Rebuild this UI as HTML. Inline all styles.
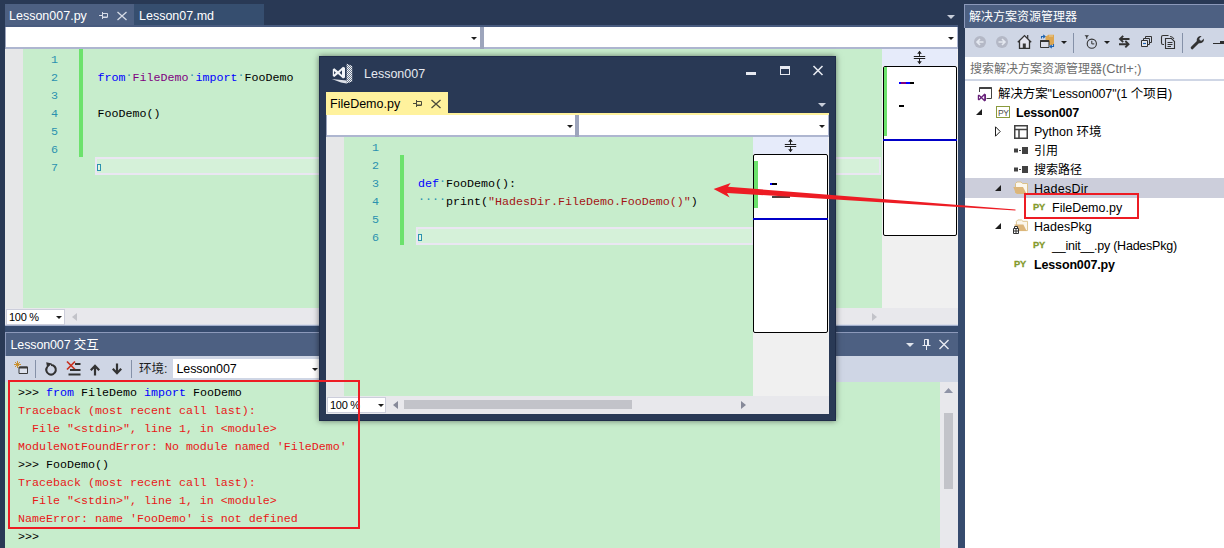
<!DOCTYPE html>
<html lang="zh-CN">
<head>
<meta charset="utf-8">
<title>Lesson007</title>
<style>
html,body{margin:0;padding:0;}
body{width:1224px;height:548px;overflow:hidden;background:#293955;position:relative;
  font-family:"Liberation Sans","Noto Sans CJK SC",sans-serif;font-size:12px;color:#000;}
.a{position:absolute;box-sizing:border-box;}
.t{position:absolute;white-space:pre;line-height:1;}
.ui{font-family:"Liberation Sans","Noto Sans CJK SC",sans-serif;font-size:12.5px;}
.mono{font-family:"Liberation Mono","Noto Sans CJK SC",monospace;font-size:11.67px;}
.code{position:absolute;white-space:pre;font-family:"Liberation Mono",monospace;font-size:11.67px;line-height:22px;height:18px;}
.ln{position:absolute;white-space:pre;font-family:"Liberation Mono",monospace;font-size:11.67px;line-height:22px;height:18px;color:#2B91AF;text-align:right;}
.kw{color:#0000FF;}
.mod{color:#800080;}
.str{color:#A31515;}
.err{color:#E81818;}
.ws{color:#2B91AF;position:relative;top:-3px;}
svg{position:absolute;overflow:visible;}
</style>
</head>
<body>
<!-- splitter bands -->
<div class="a" style="left:957px;top:0;width:8px;height:548px;background:linear-gradient(to bottom,#293955 20px,#364B6E 170px);"></div>
<div class="a" style="left:5px;top:325px;width:953px;height:8px;background:#364B6E;"></div>

<!-- ================= MAIN DOCUMENT WELL ================= -->
<div id="doc">
  <!-- tabs -->
  <div class="a" style="left:5px;top:4px;width:129px;height:21px;background:#4D6082;"></div>
  <div class="a" style="left:134px;top:4px;width:130px;height:21px;background:#364E6F;"></div>
  <div class="a" style="left:5px;top:25px;width:953px;height:2px;background:#485B7F;"></div>
  <div class="t ui" style="left:9px;top:10px;color:#fff;">Lesson007.py</div>
  <div class="t ui" style="left:139px;top:10px;color:#fff;">Lesson07.md</div>
  <!-- pin + close -->
  <svg style="left:99px;top:12px;" width="9" height="8" viewBox="0 0 9 8"><path d="M0 3.5H3.5M3.5 0V7M3.5 1.5H8.5V5H3.5M3.5 5.5H8.5" fill="none" stroke="#D6DBE6" stroke-width="1"/></svg>
  <svg style="left:117px;top:12px;" width="10" height="8" viewBox="0 0 10 8"><path d="M0.5 0L9.5 8M9.5 0L0.5 8" fill="none" stroke="#D6DBE6" stroke-width="1.3"/></svg>
  <svg style="left:947px;top:15px;" width="8" height="4" viewBox="0 0 8 4"><path d="M0 0H8L4 4Z" fill="#C8CEDA"/></svg>
  <!-- nav bar -->
  <div class="a" style="left:5px;top:27px;width:953px;height:22px;background:#9DA5BC;"></div>
  <div class="a" style="left:6px;top:27px;width:474px;height:22px;background:#fff;border-bottom:2px solid #AEB6D0;"></div>
  <div class="a" style="left:484px;top:27px;width:473.700px;height:22px;background:#fff;border-bottom:2px solid #AEB6D0;border-right:1.400px solid #AEB6D0;"></div>
  <svg style="left:471px;top:37px;" width="6" height="3" viewBox="0 0 6 3"><path d="M0 0H6L3 3Z" fill="#1E1E1E"/></svg>
  <svg style="left:948px;top:37px;" width="6" height="3" viewBox="0 0 6 3"><path d="M0 0H6L3 3Z" fill="#1E1E1E"/></svg>
  <!-- editor -->
  <div class="a" style="left:5px;top:49px;width:953px;height:259px;background:#C7EDCC;"></div>
  <div class="a" style="left:5px;top:49px;width:18px;height:259px;background:#E6E7E8;"></div>
  <div class="a" style="left:79px;top:49px;width:4px;height:108px;background:#6CE26C;"></div>
  <div class="a" style="left:95px;top:157px;width:786px;height:18px;background:#D5F1D9;border:2px solid #EAE6F2;"></div>
  <div class="a" style="left:97px;top:164px;width:4px;height:7px;border:1px solid #2B91AF;background:#E2F6E2;"></div>
  <div class="ln" style="left:23px;top:49px;width:35px;">1</div>
  <div class="ln" style="left:23px;top:67px;width:35px;">2</div>
  <div class="ln" style="left:23px;top:85px;width:35px;">3</div>
  <div class="ln" style="left:23px;top:103px;width:35px;">4</div>
  <div class="ln" style="left:23px;top:121px;width:35px;">5</div>
  <div class="ln" style="left:23px;top:139px;width:35px;">6</div>
  <div class="ln" style="left:23px;top:157px;width:35px;">7</div>
  <div class="code" style="left:97.500px;top:67px;"><span class="kw">from</span><span class="ws">·</span><span class="mod">FileDemo</span><span class="ws">·</span><span class="kw">import</span><span class="ws">·</span>FooDemo</div>
  <div class="code" style="left:97.500px;top:103px;">FooDemo()</div>
  <!-- minimap scrollbar -->
  <div class="a" style="left:882px;top:49px;width:76px;height:259px;background:#F0F0F0;"></div>
  <div class="a" style="left:882px;top:49px;width:75px;height:17px;background:#E6EBFA;"></div>
  <svg style="left:913px;top:50px;" width="13" height="15" viewBox="0 0 13 15"><path d="M0.800 6.500H12.200M0.800 8.500H12.200M6.500 1.500V6.500M6.500 8.500V13.500" fill="none" stroke="#1E1E1E" stroke-width="1"/><path d="M4.200 3.800L6.500 0.800L8.800 3.800ZM4.200 11.200L6.500 14.200L8.800 11.200Z" fill="#1E1E1E"/></svg>
  <div class="a" style="left:882.500px;top:65.500px;width:74.500px;height:170px;background:#fff;border:1px solid #000;border-radius:2px;"></div>
  <div class="a" style="left:883.500px;top:66.500px;width:3.500px;height:69.200px;background:#6CE26C;"></div>
  <div class="a" style="left:883px;top:139px;width:74px;height:2px;background:#0000C8;"></div>
  <div class="a" style="left:899px;top:82px;width:2px;height:2px;background:#0000FF;"></div>
  <div class="a" style="left:901px;top:82px;width:5px;height:2px;background:#800080;"></div>
  <div class="a" style="left:906px;top:82px;width:4px;height:2px;background:#0000FF;"></div>
  <div class="a" style="left:910px;top:82px;width:4px;height:2px;background:#000;"></div>
  <div class="a" style="left:899px;top:105px;width:5px;height:2px;background:#000;"></div>
  <!-- bottom scrollbar row -->
  <div class="a" style="left:5px;top:308px;width:953px;height:18px;background:#E8E8EC;"></div>
  <div class="a" style="left:5px;top:324px;width:953px;height:2.200px;background:linear-gradient(to bottom,#F4F5F9,#8797BC);"></div>
  <div class="a" style="left:6px;top:309px;width:59px;height:16px;background:#fff;border:1px solid #CCCEDB;"></div>
  <div class="t ui" style="left:9px;top:312px;color:#000;font-size:11px;letter-spacing:-0.300px;">100 %</div>
  <svg style="left:56px;top:316px;" width="6" height="3" viewBox="0 0 6 3"><path d="M0 0H6L3 3Z" fill="#1E1E1E"/></svg>
  <svg style="left:72px;top:313px;" width="5" height="8" viewBox="0 0 5 8"><path d="M5 0V8L0 4Z" fill="#C2C3C9"/></svg>
  <svg style="left:872px;top:313px;" width="5" height="8" viewBox="0 0 5 8"><path d="M0 0V8L5 4Z" fill="#C2C3C9"/></svg>
</div>

<!-- ================= INTERACTIVE PANEL ================= -->
<div id="inter">
  <div class="a" style="left:5px;top:332.300px;width:953px;height:23.700px;background:#4D6082;border-top:1px solid #8C99BA;border-left:1px solid #8C99BA;"></div>
  <div class="t ui" style="left:10.500px;top:339px;color:#fff;letter-spacing:-0.130px;">Lesson007 交互</div>
  <svg style="left:906px;top:343px;" width="8" height="4" viewBox="0 0 8 4"><path d="M0 0H8L4 4Z" fill="#E0E4EC"/></svg>
  <svg style="left:922px;top:339px;" width="9" height="11" viewBox="0 0 9 11"><path d="M2.5 0.5H6.5V6.5H2.5ZM5.5 0.5V6.5M0.5 6.5H8.5M4.5 6.5V11" fill="none" stroke="#E8EBF2" stroke-width="1"/></svg>
  <svg style="left:939px;top:340px;" width="10" height="9" viewBox="0 0 10 9"><path d="M0.5 0L9.5 9M9.5 0L0.5 9" fill="none" stroke="#E8EBF2" stroke-width="1.4"/></svg>
  <div class="a" style="left:5px;top:356px;width:953px;height:26px;background:#CFD6E5;"></div>
  <!-- toolbar icons -->
  <svg style="left:14px;top:361px;" width="15" height="15" viewBox="0 0 15 15"><path d="M5 6H13.500V12.500H5Z" fill="#DDE1EC" stroke="#3B3B3B" stroke-width="1"/><path d="M5 6.500H13.500" stroke="#3B3B3B" stroke-width="2"/><path d="M3.500 0V7M0 3.500H7M1 1L6 6M6 1L1 6" stroke="#C98A1E" stroke-width="0.9"/></svg>
  <div class="a" style="left:35px;top:360px;width:1px;height:18px;background:#8591A8;"></div>
  <svg style="left:44px;top:361px;" width="14" height="15" viewBox="0 0 14 15"><path d="M3.300 5.800A4.800 4.800 0 1 0 7 4" fill="none" stroke="#333" stroke-width="2.1"/><path d="M2.200 1.200L8 2.600L3.200 7Z" fill="#333"/></svg>
  <svg style="left:66px;top:361px;" width="15" height="15" viewBox="0 0 15 15"><path d="M1 0.500L9 8.500M9 0.500L1 8.500" stroke="#C8301F" stroke-width="1.7" fill="none"/><path d="M9 3H14.500M4 9H14.500M2.500 13.500H14.500" stroke="#333" stroke-width="2" fill="none"/></svg>
  <svg style="left:90px;top:364px;" width="10" height="12" viewBox="0 0 10 12"><path d="M5 1.800V11.500M0.800 6.200L5 1.800L9.200 6.200" fill="none" stroke="#333" stroke-width="2.200"/></svg>
  <svg style="left:112px;top:363px;" width="10" height="12" viewBox="0 0 10 12"><path d="M5 0.500V10.200M0.800 5.800L5 10.200L9.200 5.800" fill="none" stroke="#333" stroke-width="2.200"/></svg>
  <div class="a" style="left:131px;top:360px;width:1px;height:18px;background:#8591A8;"></div>
  <div class="t ui" style="left:139px;top:363px;color:#1E1E1E;">环境:</div>
  <div class="a" style="left:173px;top:359px;width:148px;height:19px;background:#fff;"></div>
  <div class="t ui" style="left:176.500px;top:363px;color:#000;letter-spacing:-0.120px;">Lesson007</div>
  <svg style="left:312px;top:368px;" width="6" height="3" viewBox="0 0 6 3"><path d="M0 0H6L3 3Z" fill="#1E1E1E"/></svg>
  <!-- content -->
  <div class="a" style="left:5px;top:382px;width:953px;height:166px;background:#C7EDCC;"></div>
  <div class="a" style="left:940px;top:382px;width:18px;height:166px;background:#E8E8EC;"></div>
  <svg style="left:944px;top:388px;" width="9" height="5" viewBox="0 0 9 5"><path d="M0 5H9L4.5 0Z" fill="#8E93A6"/></svg>
  <div class="a" style="left:944px;top:413px;width:9px;height:76px;background:#C2C3C9;"></div>
  <div class="code" style="left:18px;top:382px;">&gt;&gt;&gt; <span class="kw">from</span> FileDemo <span class="kw">import</span> FooDemo</div>
  <div class="code err" style="left:18px;top:400px;">Traceback (most recent call last):</div>
  <div class="code err" style="left:18px;top:418px;">  File "&lt;stdin&gt;", line 1, in &lt;module&gt;</div>
  <div class="code err" style="left:18px;top:436px;">ModuleNotFoundError: No module named 'FileDemo'</div>
  <div class="code" style="left:18px;top:454px;">&gt;&gt;&gt; FooDemo()</div>
  <div class="code err" style="left:18px;top:472px;">Traceback (most recent call last):</div>
  <div class="code err" style="left:18px;top:490px;">  File "&lt;stdin&gt;", line 1, in &lt;module&gt;</div>
  <div class="code err" style="left:18px;top:508px;">NameError: name 'FooDemo' is not defined</div>
  <div class="code" style="left:18px;top:526px;">&gt;&gt;&gt; </div>
</div>

<!-- ================= SOLUTION EXPLORER ================= -->
<div id="sol">
  <div class="a" style="left:964.300px;top:4.300px;width:260px;height:23.700px;background:#4D6082;border-top:1px solid #8C99BA;border-left:1px solid #8C99BA;"></div>
  <div class="t ui" style="left:969px;top:11px;color:#fff;font-size:12px;">解决方案资源管理器</div>
  <div class="a" style="left:965px;top:28px;width:259px;height:29px;background:#CFD6E5;"></div>
  <!-- toolbar icons -->
  <svg style="left:974px;top:36px;" width="12" height="12" viewBox="0 0 12 12"><circle cx="6" cy="6" r="6" fill="#B4B8C6"/><path d="M9.5 6H3.5M6 3L3 6L6 9" fill="none" stroke="#E4E8F0" stroke-width="1.6"/></svg>
  <svg style="left:996px;top:36px;" width="12" height="12" viewBox="0 0 12 12"><circle cx="6" cy="6" r="6" fill="#B4B8C6"/><path d="M2.5 6H8.5M6 3L9 6L6 9" fill="none" stroke="#E4E8F0" stroke-width="1.6"/></svg>
  <svg style="left:1017px;top:34px;" width="15" height="15" viewBox="0 0 15 15"><path d="M2.500 7.500V14.300H12.500V7.500L7.500 2.500Z" fill="#E4E4EE"/><path d="M5.800 9.500H8.800V14.300H5.800Z" fill="#3A3A3A"/><path d="M0.800 8.300L7.500 1.600L14.200 8.300M2.500 7V14.300H12.500V7" fill="none" stroke="#333" stroke-width="1.300"/><path d="M10.700 1V4.500" stroke="#333" stroke-width="1.200"/></svg>
  <svg style="left:1040px;top:34px;" width="16" height="16" viewBox="0 0 16 16"><path d="M5.500 2H7L8 0.700H14V11H5.500Z" fill="#DDA650"/><path d="M9 2H13" stroke="#F1D9A8" stroke-width="0.800"/><path d="M0.500 6.500H9V13.500H0.500Z" fill="#DADDE8" stroke="#333" stroke-width="1"/><path d="M0.500 7H9" stroke="#333" stroke-width="2"/><path d="M1.500 4.500V2.500H4.500M3.200 0.800L5 2.500L3.200 4.200" fill="none" stroke="#1E63B0" stroke-width="1.100"/><path d="M13.500 10V12.500H10.500M11.800 10.800L10 12.500L11.800 14.200" fill="none" stroke="#1E63B0" stroke-width="1.100"/></svg>
  <svg style="left:1061px;top:41px;" width="6" height="3" viewBox="0 0 6 3"><path d="M0 0H6L3 3Z" fill="#1E1E1E"/></svg>
  <div class="a" style="left:1073px;top:33px;width:1px;height:20px;background:#8591A8;"></div>
  <svg style="left:1083px;top:34px;" width="15" height="15" viewBox="0 0 15 15"><circle cx="8.800" cy="9.700" r="4.600" fill="none" stroke="#333" stroke-width="1.100"/><path d="M8.800 6.800V9.900H11.300" fill="none" stroke="#333" stroke-width="1"/><path d="M1.500 1.300H6L4.300 3V4.800H3.200V3Z" fill="#333"/></svg>
  <svg style="left:1104px;top:41px;" width="6" height="3" viewBox="0 0 6 3"><path d="M0 0H6L3 3Z" fill="#1E1E1E"/></svg>
  <svg style="left:1118px;top:35px;" width="13" height="13" viewBox="0 0 13 13"><path d="M2 4H11.500M5.200 0.800L2 4L5.200 7.200M10.500 9.200H1M7.300 6L10.500 9.200L7.300 12.400" fill="none" stroke="#333" stroke-width="1.900"/></svg>
  <svg style="left:1140px;top:35px;" width="13" height="12" viewBox="0 0 13 12"><path d="M5.500 3V1.500H11.500V7.500H10M3.500 5V3.500H9.500V9.500H8" fill="none" stroke="#333" stroke-width="1"/><path d="M1.500 5.500H7.500V11.500H1.500Z" fill="#E4E7F0" stroke="#333" stroke-width="1"/><path d="M3 8.500H6" stroke="#1E63B0" stroke-width="1.200"/></svg>
  <svg style="left:1161px;top:34px;" width="15" height="15" viewBox="0 0 15 15"><path d="M3 10.500H2Q0.500 10.500 0.500 9V3Q0.500 1.500 2 1.500H7.500" fill="none" stroke="#333" stroke-width="1.100"/><path d="M4.500 4.500H10.500L13.500 7.500V14.500H4.500Z" fill="none" stroke="#333" stroke-width="1.100"/><path d="M6.500 8.500H11.500M6.500 10.500H11.500M6.500 12.500H10" stroke="#333" stroke-width="1"/><path d="M9 2.500Q12 2.500 13 5" fill="none" stroke="#333" stroke-width="1"/></svg>
  <div class="a" style="left:1182px;top:33px;width:1px;height:20px;background:#8591A8;"></div>
  <svg style="left:1190px;top:35px;" width="15" height="15" viewBox="0 0 15 15"><path d="M2.200 12.800L8.500 6.500" stroke="#333" stroke-width="3" stroke-linecap="round"/><path d="M13.900 3.400L11.600 5.700L9.700 5.300L9.300 3.400L11.600 1.100A4.200 4.200 0 0 0 6.800 6.200L8.800 8.200A4.200 4.200 0 0 0 13.900 3.400Z" fill="#333"/></svg>
  <div class="a" style="left:1213px;top:43px;width:11px;height:1.400px;background:#2D2D2D;"></div>
  <div class="a" style="left:1220px;top:40.500px;width:4px;height:3.900px;background:#2D2D2D;"></div>
  <!-- search -->
  <div class="a" style="left:965px;top:57px;width:259px;height:22px;background:#fff;"></div>
  <div class="t ui" style="left:970px;top:63px;color:#6D6D6D;font-size:12px;">搜索解决方案资源管理器<span style="font-size:12.800px;">(Ctrl+;)</span></div>
  <div class="a" style="left:965px;top:79px;width:259px;height:2px;background:#CFD6E5;"></div>
  <div class="a" style="left:965px;top:81px;width:259px;height:467px;background:#fff;"></div>
  <svg style="left:977px;top:86px;" width="16" height="16" viewBox="0 0 16 16"><path d="M2.5 6V1.5H14.5V12.5H9.5" fill="none" stroke="#424242" stroke-width="1"/><path d="M2.5 2H14.5" stroke="#424242" stroke-width="2"/><path d="M0.8 9.2L2 8.6L4.4 10.6L7.4 7.6L9 8.4V14.6L7.4 15.4L4.4 12.4L2 14.4L0.8 13.8ZM2 10.2V12.8L3.4 11.5ZM7.2 9.8L5.2 11.5L7.2 13.2Z" fill="#68217A" fill-rule="evenodd"/></svg>
  <div class="t ui" style="left:998px;top:88px;letter-spacing:-0.100px;">解决方案"Lesson007"(1 个项目)</div>
  <svg style="left:976px;top:109px;" width="6" height="6" viewBox="0 0 6 6"><path d="M6 0V6H0Z" fill="#1E1E1E"/></svg>
  <div class="a" style="left:996px;top:106px;width:14px;height:12px;border:1px solid #8A9A3C;background:#fff;"></div>
  <div class="t" style="left:998px;top:108.500px;font-family:'Liberation Sans',sans-serif;font-size:8.500px;color:#4A4A4A;letter-spacing:-0.500px;">PY</div>
  <div class="t ui" style="left:1016px;top:107px;font-weight:bold;letter-spacing:-0.180px;">Lesson007</div>
  <svg style="left:995px;top:126px;" width="6" height="11" viewBox="0 0 6 11"><path d="M0.5 0.8V10.2L5.2 5.5Z" fill="#fff" stroke="#1E1E1E" stroke-width="1"/></svg>
  <svg style="left:1014px;top:125px;" width="14" height="14" viewBox="0 0 14 14"><path d="M0.75 0.75H13.25V13.25H0.75ZM0.75 4.5H13.25M5 4.5V13.25" fill="none" stroke="#424242" stroke-width="1.5"/></svg>
  <div class="t ui" style="left:1034px;top:126px;">Python 环境</div>
  <svg style="left:1014px;top:147px;" width="14" height="7" viewBox="0 0 14 7"><path d="M0 1.5H4V5.5H0ZM8 0H14V7H8Z" fill="#424242"/><path d="M5 3.5H7" stroke="#424242" stroke-width="1"/></svg>
  <div class="t ui" style="left:1034px;top:145px;font-size:12px;">引用</div>
  <svg style="left:1014px;top:166px;" width="14" height="7" viewBox="0 0 14 7"><path d="M0 1.5H4V5.5H0ZM8 0H14V7H8Z" fill="#424242"/><path d="M5 3.5H7" stroke="#424242" stroke-width="1"/></svg>
  <div class="t ui" style="left:1034px;top:164px;font-size:12px;">搜索路径</div>
  <div class="a" style="left:965px;top:178.400px;width:259px;height:19.200px;background:#CCCEDB;"></div>
  <svg style="left:995px;top:185px;" width="6" height="6" viewBox="0 0 6 6"><path d="M6 0V6H0Z" fill="#1E1E1E"/></svg>
  <svg style="left:1013px;top:181px;" width="16" height="14" viewBox="0 0 16 14"><path d="M2.500 12V2.500L4 1H8L9.500 2.500H14.500V12.500H4" fill="#FBF7EC" stroke="#DBC188" stroke-width="1"/><path d="M0.300 6H10L13.500 12.800H3Z" fill="#DCB67A"/></svg>
  <div class="t ui" style="left:1034px;top:183px;letter-spacing:0.250px;">HadesDir</div>
  <div class="t" style="left:1033px;top:203px;font-family:'Liberation Sans',sans-serif;font-size:9.300px;font-weight:bold;color:#849A2C;letter-spacing:-0.200px;-webkit-text-stroke:0.300px #849A2C;">PY</div>
  <div class="t ui" style="left:1052px;top:202px;">FileDemo.py</div>
  <svg style="left:995px;top:223px;" width="6" height="6" viewBox="0 0 6 6"><path d="M6 0V6H0Z" fill="#1E1E1E"/></svg>
  <svg style="left:1014px;top:219px;" width="15" height="13" viewBox="0 0 16 14"><path d="M2.500 12V2.500L4 1H8L9.500 2.500H14.500V12.500H4" fill="#FBF7EC" stroke="#DBC188" stroke-width="1"/><path d="M0.300 6H10L13.500 12.800H3Z" fill="#DCB67A"/></svg>
  <svg style="left:1013px;top:226px;" width="6" height="8" viewBox="0 0 6 8"><path d="M0.5 2.5H5.5V7.5H0.5ZM3 2.5V7.5M0.5 5H5.5M1.5 2.5V0.5H4.5V2.5" fill="#fff" stroke="#333" stroke-width="1"/></svg>
  <div class="t ui" style="left:1034px;top:221px;">HadesPkg</div>
  <div class="t" style="left:1033px;top:241px;font-family:'Liberation Sans',sans-serif;font-size:9.300px;font-weight:bold;color:#849A2C;letter-spacing:-0.200px;-webkit-text-stroke:0.300px #849A2C;">PY</div>
  <div class="t ui" style="left:1052px;top:240px;letter-spacing:-0.230px;">__init__.py (HadesPkg)</div>
  <div class="t" style="left:1014px;top:260px;font-family:'Liberation Sans',sans-serif;font-size:9.300px;font-weight:bold;color:#849A2C;letter-spacing:-0.200px;-webkit-text-stroke:0.300px #849A2C;">PY</div>
  <div class="t ui" style="left:1034px;top:259px;font-weight:bold;letter-spacing:-0.150px;">Lesson007.py</div>
</div>

<!-- ================= FLOATING WINDOW ================= -->
<div id="float">
  <div class="a" style="left:319px;top:56px;width:517px;height:365px;background:#293955;border:1px solid #1F2C48;box-shadow:0 0 6px rgba(0,0,0,0.5);"></div>
  <!-- title -->
  <svg style="left:332px;top:63px;" width="21" height="22" viewBox="0 0 21 22"><defs><pattern id="ck" width="2" height="2" patternUnits="userSpaceOnUse"><rect width="1" height="1" fill="#F2F4F8"/><rect x="1" y="1" width="1" height="1" fill="#F2F4F8"/></pattern></defs><path d="M0.800 6.200L2.300 5.300L6 8.300L11 3.800L13 4.800V14.600L11 15.600L6 11L2.300 14L0.800 13.100ZM2.100 8V11.400L3.900 9.700ZM10 7.300L7.500 9.700L10 12Z" fill="#F2F4F8" fill-rule="evenodd"/><path d="M14.700 0.700L20.200 3V18.600L14.700 20.600Z" fill="url(#ck)"/><path d="M14.700 0.700L20.200 3V18.600L14.700 20.600Z" fill="#F2F4F8" fill-opacity="0.350"/><path d="M-0.200 16L14.700 17.400V20.600L9 19.400Z" fill="#F2F4F8" fill-opacity="0.900"/></svg>
  <div class="t ui" style="left:364px;top:68px;color:#E6E9F0;">Lesson007</div>
  <div class="a" style="left:746px;top:72px;width:10px;height:3px;background:#E6E9F0;"></div>
  <div class="a" style="left:780px;top:66px;width:10px;height:9px;border:1px solid #E6E9F0;border-top-width:3px;"></div>
  <svg style="left:813px;top:66px;" width="10" height="9" viewBox="0 0 10 9"><path d="M0.500 0L9.500 9M9.500 0L0.500 9" fill="none" stroke="#E6E9F0" stroke-width="1.6"/></svg>
  <!-- tab -->
  <div class="a" style="left:326px;top:92px;width:122px;height:21px;background:#FFF29D;"></div>
  <div class="a" style="left:326px;top:113px;width:503px;height:2px;background:#FFF29D;"></div>
  <div class="t ui" style="left:330px;top:98px;color:#000;">FileDemo.py</div>
  <svg style="left:413px;top:100px;" width="9" height="8" viewBox="0 0 9 8"><path d="M0 3.500H3.500M3.500 0V7M3.500 1.500H8.500V5H3.500M3.500 5.500H8.500" fill="none" stroke="#4B4B3A" stroke-width="1"/></svg>
  <svg style="left:431px;top:100px;" width="10" height="8" viewBox="0 0 10 8"><path d="M0.500 0L9.500 8M9.500 0L0.500 8" fill="none" stroke="#4B4B3A" stroke-width="1.3"/></svg>
  <svg style="left:818px;top:103px;" width="8" height="4" viewBox="0 0 8 4"><path d="M0 0H8L4 4Z" fill="#C8CEDA"/></svg>
  <!-- nav bar -->
  <div class="a" style="left:326px;top:115px;width:503px;height:22px;background:#9DA5BC;"></div>
  <div class="a" style="left:327px;top:115px;width:248px;height:22px;background:#fff;border-bottom:2px solid #AEB6D0;"></div>
  <div class="a" style="left:579px;top:115px;width:249.700px;height:22px;background:#fff;border-bottom:2px solid #AEB6D0;border-right:1.400px solid #AEB6D0;"></div>
  <svg style="left:567px;top:125px;" width="6" height="3" viewBox="0 0 6 3"><path d="M0 0H6L3 3Z" fill="#1E1E1E"/></svg>
  <svg style="left:819px;top:125px;" width="6" height="3" viewBox="0 0 6 3"><path d="M0 0H6L3 3Z" fill="#1E1E1E"/></svg>
  <!-- editor -->
  <div class="a" style="left:326px;top:137px;width:503px;height:259px;background:#C7EDCC;"></div>
  <div class="a" style="left:326px;top:137px;width:18px;height:259px;background:#E6E7E8;"></div>
  <div class="a" style="left:400px;top:155px;width:4px;height:90px;background:#6CE26C;"></div>
  <div class="a" style="left:416px;top:227px;width:338px;height:18px;background:#D5F1D9;border:2px solid #EAE6F2;"></div>
  <div class="a" style="left:418px;top:234px;width:4px;height:7px;border:1px solid #2B91AF;background:#E2F6E2;"></div>
  <div class="ln" style="left:344px;top:137px;width:35px;">1</div>
  <div class="ln" style="left:344px;top:155px;width:35px;">2</div>
  <div class="ln" style="left:344px;top:173px;width:35px;">3</div>
  <div class="ln" style="left:344px;top:191px;width:35px;">4</div>
  <div class="ln" style="left:344px;top:209px;width:35px;">5</div>
  <div class="ln" style="left:344px;top:227px;width:35px;">6</div>
  <div class="code" style="left:418px;top:173px;"><span class="kw">def</span><span class="ws">·</span>FooDemo():</div>
  <div class="code" style="left:418px;top:191px;"><span class="ws">····</span>print(<span class="str">"HadesDir.FileDemo.FooDemo()"</span>)</div>
  <!-- minimap -->
  <div class="a" style="left:753px;top:137px;width:76px;height:259px;background:#F0F0F0;"></div>
  <div class="a" style="left:753px;top:137px;width:75px;height:17px;background:#E6EBFA;"></div>
  <svg style="left:784px;top:138px;" width="13" height="15" viewBox="0 0 13 15"><path d="M0.800 6.500H12.200M0.800 8.500H12.200M6.500 1.500V6.500M6.500 8.500V13.500" fill="none" stroke="#1E1E1E" stroke-width="1"/><path d="M4.200 3.800L6.500 0.800L8.800 3.800ZM4.200 11.200L6.500 14.200L8.800 11.200Z" fill="#1E1E1E"/></svg>
  <div class="a" style="left:753px;top:154px;width:75px;height:178.500px;background:#fff;border:1px solid #000;border-radius:2px;"></div>
  <div class="a" style="left:754.300px;top:161px;width:3.700px;height:47px;background:#6CE26C;"></div>
  <div class="a" style="left:753px;top:218px;width:75px;height:2px;background:#0000C8;"></div>
  <div class="a" style="left:770px;top:183px;width:2px;height:2px;background:#0000FF;"></div>
  <div class="a" style="left:772px;top:183px;width:5px;height:2px;background:#000;"></div>
  <div class="a" style="left:772px;top:196px;width:4px;height:1.500px;background:#444;"></div>
  <div class="a" style="left:776px;top:196px;width:14px;height:1.500px;background:#5A3A3A;"></div>
  <!-- bottom scrollbar row -->
  <div class="a" style="left:326px;top:396px;width:503px;height:18px;background:#E8E8EC;"></div>
  <div class="a" style="left:327px;top:397px;width:59px;height:16px;background:#fff;border:1px solid #CCCEDB;"></div>
  <div class="t ui" style="left:330px;top:400px;color:#000;font-size:11px;letter-spacing:-0.300px;">100 %</div>
  <svg style="left:378px;top:404px;" width="6" height="3" viewBox="0 0 6 3"><path d="M0 0H6L3 3Z" fill="#1E1E1E"/></svg>
  <svg style="left:393px;top:401px;" width="5" height="8" viewBox="0 0 5 8"><path d="M5 0V8L0 4Z" fill="#868999"/></svg>
  <div class="a" style="left:404px;top:400px;width:228px;height:9px;background:#C2C3C9;"></div>
  <svg style="left:741px;top:401px;" width="5" height="8" viewBox="0 0 5 8"><path d="M0 0V8L5 4Z" fill="#868999"/></svg>
</div>

<!-- ================= ANNOTATIONS ================= -->
<div id="anno">
  <div class="a" style="left:8px;top:380px;width:352px;height:148.500px;border:2px solid #ED1C24;"></div>
  <div class="a" style="left:1024px;top:193px;width:115px;height:26.400px;border:2px solid #ED1C24;"></div>
  <svg style="left:0;top:0;" width="1224" height="548" viewBox="0 0 1224 548"><path d="M713.600 189.100L730.700 183.100L728.100 186.700L1015.500 209.500L1015.500 210.500L727 193L729.700 197.500Z" fill="#ED1C24"/></svg>
</div>

</body>
</html>
